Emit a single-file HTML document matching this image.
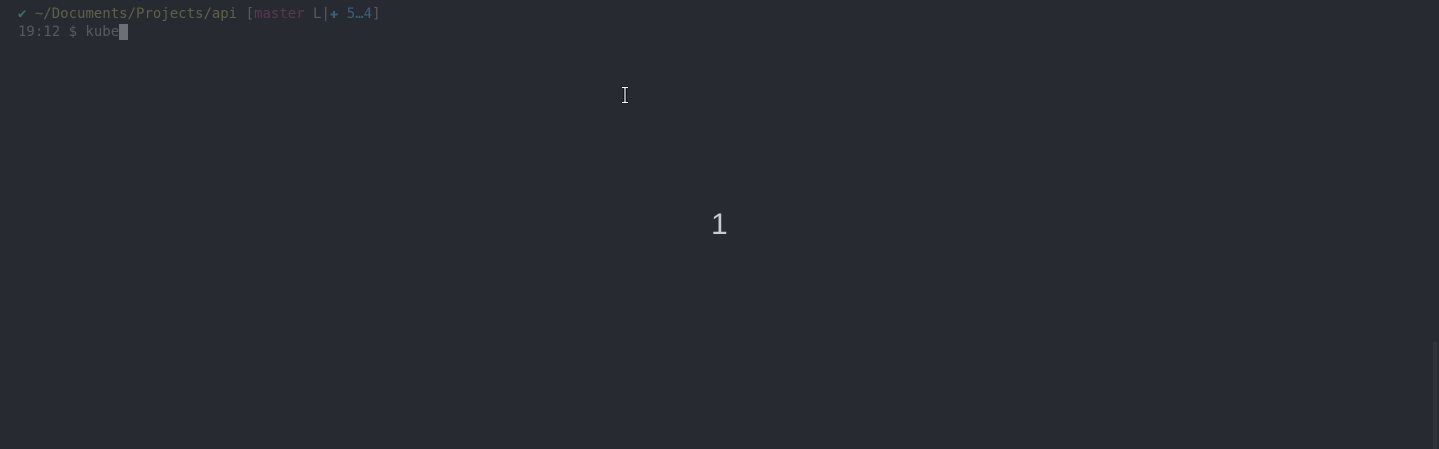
<!DOCTYPE html>
<html><head><meta charset="utf-8"><style>
html,body{margin:0;padding:0;width:1439px;height:449px;background:#272a31;overflow:hidden;position:relative}
.t{position:absolute;left:18px;top:5px;font-family:"DejaVu Sans Mono","Liberation Mono",monospace;font-size:14px;line-height:18px;color:#575b61;white-space:pre}
.g{color:#3a7060}.y{color:#625f48}.m{color:#5e3552}.b{color:#37617f}.c{background:#6b6f76;color:#272a31}
.one{position:absolute;left:711px;top:208px;font-family:"Liberation Sans",sans-serif;font-size:30px;color:#c8ccd2}
.sb{position:absolute;left:1433px;top:342px;width:4px;height:107px;background:#30343a}
</style></head><body>
<div class="t"><span class="g">✔</span> <span class="y">~/Documents/Projects/api</span> [<span class="m">master</span> L|<span class="b">✚ 5…4</span>]
19:12 $ kube<span class="c"> </span></div>
<svg style="position:absolute;left:620px;top:86px" width="10" height="18" viewBox="0 0 10 18"><path d="M2 1.5h6M2 16.5h6M5 1.5v15" stroke="#000" stroke-width="3"/><path d="M2 1.5h6M2 16.5h6M5 1.5v15" stroke="#fff" stroke-width="1.2"/></svg>
<div class="one">1</div>
<div class="sb"></div>
</body></html>
